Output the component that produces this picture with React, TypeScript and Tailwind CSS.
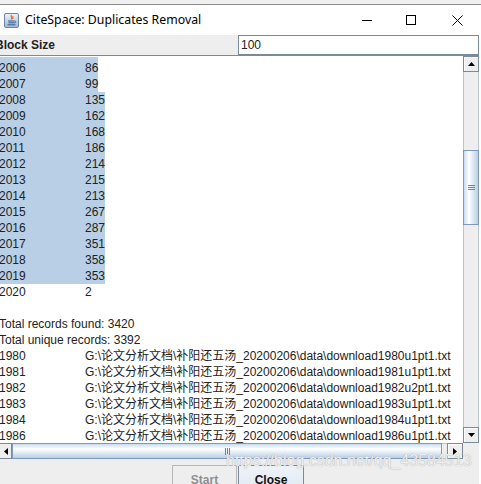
import React from "react";

const selected: [string, string][] = [
  ["2006", "86"],
  ["2007", "99"],
  ["2008", "135"],
  ["2009", "162"],
  ["2010", "168"],
  ["2011", "186"],
  ["2012", "214"],
  ["2013", "215"],
  ["2014", "213"],
  ["2015", "267"],
  ["2016", "287"],
  ["2017", "351"],
  ["2018", "358"],
  ["2019", "353"],
];

const files: [string, string][] = [
  ["1980", "1980u1"],
  ["1981", "1981u1"],
  ["1982", "1982u2"],
  ["1983", "1983u1"],
  ["1984", "1984u1"],
  ["1986", "1986u1"],
];

const base = "G:\\论文分析文档\\补阳还五汤_20200206\\data\\download";

function Arrow({ dir }: { dir: "up" | "down" | "left" | "right" }) {
  const pts = {
    up: "0,4 7,4 3.5,0",
    down: "0,0 7,0 3.5,4",
    left: "4,0 4,7 0,3.5",
    right: "0,0 0,7 4,3.5",
  }[dir];
  const vertical = dir === "up" || dir === "down";
  return (
    <svg width={vertical ? 7 : 4} height={vertical ? 4 : 7} viewBox={vertical ? "0 0 7 4" : "0 0 4 7"}>
      <polygon points={pts} fill="#000" />
    </svg>
  );
}

function JavaIcon() {
  return (
    <svg width="15" height="15" viewBox="0 0 15 15">
      <defs>
        <linearGradient id="jbg" x1="0" y1="0" x2="0" y2="1">
          <stop offset="0" stopColor="#eef3f8" />
          <stop offset="1" stopColor="#9fb6cf" />
        </linearGradient>
      </defs>
      <rect x="0.5" y="0.5" width="14" height="14" rx="1.5" fill="url(#jbg)" stroke="#6f86a3" />
      <path d="M7.5 2 C6 3.5 9 4.5 7.2 6.5 M9 3 C8.2 4 9.6 4.6 8.6 5.8" stroke="#e2611c" strokeWidth="1.1" fill="none" />
      <path d="M4 8 H10.5 M4.5 9.8 H10 M3.5 11.8 H11.5" stroke="#2d5e9e" strokeWidth="1" fill="none" />
      <path d="M10.5 8 C12.5 8 12.5 10 10 10" stroke="#2d5e9e" strokeWidth="0.9" fill="none" />
    </svg>
  );
}

function ArrowButton({ dir, className = "" }: { dir: "up" | "down" | "left" | "right"; className?: string }) {
  return (
    <div
      className={`w-[16px] h-[16px] shrink-0 flex items-center justify-center bg-[#eeeeee] border border-[#7a8a99] shadow-[inset_1px_1px_0_#ffffff] ${className}`}
    >
      <Arrow dir={dir} />
    </div>
  );
}

export default function App() {
  return (
    <div className="w-[481px] h-[484px] overflow-hidden bg-white relative text-[12px] text-[#222222] font-['Liberation_Sans',Arial,sans-serif]">
      {/* outer strip above window */}
      <div className="h-[4px] bg-[#f0f0f0]" />

      {/* Title bar */}
      <div className="h-[31px] border-t border-[#8a8a8a] bg-white flex items-center pl-[4px] pr-[1px]">
        <JavaIcon />
        <span className="ml-[6px] text-[12.3px] text-black font-['Noto_Sans','Liberation_Sans',sans-serif]">
          CiteSpace: Duplicates Removal
        </span>
        <div className="flex-1" />
        <div className="w-[46px] h-full flex items-center justify-center">
          <div className="w-[10px] h-px bg-black ml-[3px]" />
        </div>
        <div className="w-[46px] h-full flex items-center justify-center">
          <div className="w-[10px] h-[10px] border border-black" />
        </div>
        <div className="w-[46px] h-full flex items-center justify-center">
          <svg width="11" height="11" viewBox="0 0 11 11">
            <path d="M0.5 0.5 L10.5 10.5 M10.5 0.5 L0.5 10.5" stroke="#000" strokeWidth="1" />
          </svg>
        </div>
      </div>

      <div className="w-[479px]">
        {/* Block Size row */}
        <div className="h-[20px] flex bg-[#eeeeee]">
          <div className="w-[238px] flex items-center">
            <span className="ml-[-5px] font-bold text-[#222222]">Block Size</span>
          </div>
          <div className="flex-1 bg-white border border-[#7a8a99] flex items-center pl-[2px] text-[#222222]">100</div>
        </div>

        {/* Scroll pane */}
        <div className="h-[404px] border-t border-[#7a8a99] flex flex-col">
          <div className="flex h-[387px]">
            {/* Text area */}
            <div className="flex-1 overflow-hidden pt-px bg-white leading-[16px] whitespace-nowrap">
              {selected.map(([y, n], i) => (
                <div key={y} className="flex">
                  <div className={`flex bg-[#b8cfe5] ${i === 0 ? "pt-[3px]" : ""}`}>
                    <span className="w-[86px] ml-[-1px]">{y}</span>
                    <span>{n}</span>
                  </div>
                </div>
              ))}
              <div className="flex">
                <span className="w-[86px] ml-[-1px]">2020</span>
                <span>2</span>
              </div>
              <div className="h-[16px]" />
              <div className="ml-[-1px]">Total records found: 3420</div>
              <div className="ml-[-1px]">Total unique records: 3392</div>
              {files.map(([y, f]) => (
                <div key={y} className="flex">
                  <span className="w-[86px] shrink-0 ml-[-1px]">{y}</span>
                  <span className="font-['Liberation_Sans','Noto_Sans_CJK_SC',sans-serif]">
                    {base + f + "pt1.txt"}
                  </span>
                </div>
              ))}
            </div>

            {/* Vertical scrollbar */}
            <div className="w-[16px] flex flex-col bg-[#eeeeee]">
              <ArrowButton dir="up" />
              <div className="flex-1 flex flex-col border-x border-[#b8c4d0]">
                <div className="mt-[78px] h-[75px] mx-[-1px] border border-[#7f98bd] bg-[linear-gradient(to_right,#c8ddf2_0%,#ffffff_35%,#b8cfe5_100%)] flex flex-col items-center justify-center gap-[1px]">
                  <div className="w-[7px] h-px bg-[#6382bf]" />
                  <div className="w-[7px] h-px bg-[#6382bf]" />
                  <div className="w-[7px] h-px bg-[#6382bf]" />
                </div>
              </div>
              <ArrowButton dir="down" />
            </div>
          </div>

          {/* Horizontal scrollbar */}
          <div className="h-[16px] flex bg-[#eeeeee]">
            <div className="w-[12px] h-[16px] shrink-0 flex items-center justify-end pr-[3px] bg-[#eeeeee] border-y border-r border-[#7a8a99]">
              <Arrow dir="left" />
            </div>
            <div className="flex-1 flex border-y border-[#b8c4d0]">
              <div className="w-[430px] my-[-1px] border border-[#7f98bd] bg-[linear-gradient(to_bottom,#c8ddf2_0%,#ffffff_35%,#b8cfe5_100%)] flex items-center justify-center gap-[1px]">
                <div className="w-px h-[7px] bg-[#6382bf]" />
                <div className="w-px h-[7px] bg-[#6382bf]" />
                <div className="w-px h-[7px] bg-[#6382bf]" />
              </div>
            </div>
            <ArrowButton dir="right" />
            <div className="w-[16px] h-[16px] bg-[#eeeeee]" />
          </div>
        </div>

        {/* Button panel */}
        <div className="h-[26px] bg-[#eeeeee] flex items-start pt-[6px]">
          <div className="ml-[172px] w-[65px] h-[30px] shrink-0 border border-[#b8b8b8] bg-[#eeeeee] flex items-center justify-center font-bold text-[#8e8e8e]">
            Start
          </div>
          <div className="ml-[1px] w-[66px] h-[30px] shrink-0 border border-[#7a8a99] bg-[linear-gradient(to_bottom,#eef3f8,#dfe7f0)] flex items-center justify-center font-bold text-[#111111]">
            Close
          </div>
        </div>
      </div>

      {/* watermark */}
      <div className="absolute left-[226px] top-[451px] pointer-events-none text-[16px] leading-[20px] text-[#eeeeee] [text-shadow:0_0_1px_#9a9a9a] font-['Liberation_Sans',Arial,sans-serif]">
        https://blog.csdn.net/qq_43584513
      </div>
    </div>
  );
}
